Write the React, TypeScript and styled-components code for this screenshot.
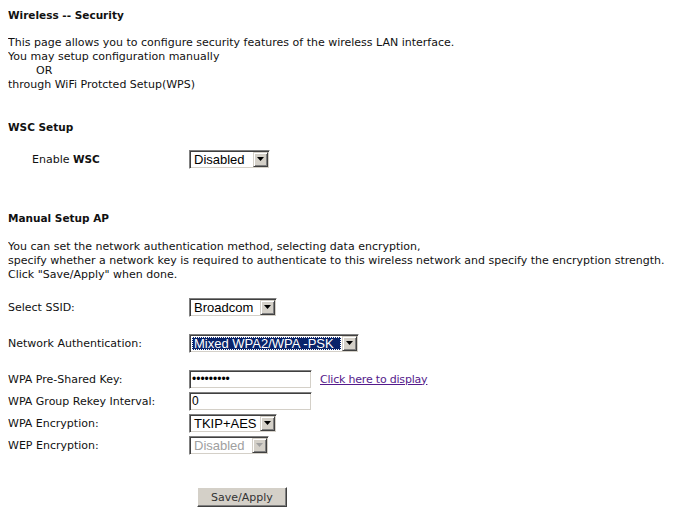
import React from "react";
import styled, { createGlobalStyle } from "styled-components";

const GlobalStyle = createGlobalStyle`
  body {
    margin: 8px;
    background: #ffffff;
    color: #000000;
    font-family: "DejaVu Sans", Verdana, sans-serif;
    font-size: 11px;
  }
`;

const Page = styled.div`
  display: flex;
  flex-direction: column;
  width: 676px;
`;

const Title = styled.div<{ top?: number }>`
  margin-top: ${(p) => p.top ?? 0}px;
  font-weight: bold;
  font-size: 10.5px;
  line-height: 14px;
  color: #111;
`;

const Text = styled.div<{ top?: number }>`
  margin-top: ${(p) => p.top ?? 0}px;
  line-height: 14px;
  color: #111;
  white-space: pre;
`;

const Row = styled.div<{ top?: number }>`
  display: flex;
  align-items: center;
  height: 20px;
  margin-top: ${(p) => p.top ?? 0}px;
`;

const Label = styled.div<{ indent?: number }>`
  width: ${(p) => 181 - (p.indent ?? 0)}px;
  padding-left: ${(p) => p.indent ?? 0}px;
  color: #111;
  b {
    font-weight: bold;
    font-size: 10.5px;
  }
`;

const SelectBox = styled.div<{ w: number }>`
  display: flex;
  align-items: stretch;
  box-sizing: border-box;
  width: ${(p) => p.w}px;
  height: 19px;
  border-top: 1px solid #808080;
  border-left: 1px solid #808080;
  border-bottom: 1px solid #ffffff;
  border-right: 1px solid #ffffff;
  box-shadow: inset 1px 1px 0 #404040, inset -1px -1px 0 #d4d0c8;
  background: #ffffff;
  padding: 1px;
`;

const SelectValue = styled.div<{ selected?: boolean; disabled?: boolean }>`
  flex: 1;
  display: flex;
  align-items: center;
  padding-left: 2px;
  margin: 1px;
  font-family: "Liberation Sans", Arial, sans-serif;
  font-size: 13px;
  background: ${(p) => (p.selected ? "#0a246a" : "transparent")};
  color: ${(p) => (p.selected ? "#ffffff" : p.disabled ? "#a0a0a0" : "#000000")};
  outline: ${(p) => (p.selected ? "1px dotted #ffffff" : "none")};
  outline-offset: -1px;
  white-space: nowrap;
  overflow: hidden;
`;

const ArrowButton = styled.div`
  width: 15px;
  box-sizing: border-box;
  display: flex;
  align-items: center;
  justify-content: center;
  background: #d4d0c8;
  border-top: 1px solid #d4d0c8;
  border-left: 1px solid #d4d0c8;
  border-bottom: 1px solid #404040;
  border-right: 1px solid #404040;
  box-shadow: inset 1px 1px 0 #ffffff, inset -1px -1px 0 #808080;
`;

const TextInput = styled.input`
  box-sizing: border-box;
  width: 123px;
  height: 19px;
  margin: 0;
  padding: 0 2px;
  border-top: 1px solid #808080;
  border-left: 1px solid #808080;
  border-bottom: 1px solid #ffffff;
  border-right: 1px solid #ffffff;
  box-shadow: inset 1px 1px 0 #404040, inset -1px -1px 0 #d4d0c8;
  font-family: "Liberation Sans", Arial, sans-serif;
  font-size: 12px;
  color: #000;
  background: #fff;
  outline: none;
`;

const DisplayLink = styled.a`
  margin-left: 8px;
  color: #551a8b;
  text-decoration: underline;
  font-family: "DejaVu Sans", Verdana, sans-serif;
  font-size: 11px;
  letter-spacing: -0.2px;
  cursor: pointer;
`;

const ButtonRow = styled.div`
  display: flex;
  margin-top: 32px;
  padding-left: 189px;
`;

const Button = styled.button`
  box-sizing: border-box;
  width: 90px;
  height: 20px;
  margin: 0;
  padding: 0;
  background: #d4d0c8;
  border-top: 1px solid #ffffff;
  border-left: 1px solid #ffffff;
  border-bottom: 1px solid #404040;
  border-right: 1px solid #404040;
  box-shadow: inset -1px -1px 0 #808080;
  font-family: "DejaVu Sans", Verdana, sans-serif;
  font-size: 11px;
  color: #333;
`;

const Arrow: React.FC<{ disabled?: boolean }> = ({ disabled }) => (
  <svg width="7" height="4" viewBox="0 0 7 4">
    <path d="M0 0h7L3.5 4z" fill={disabled ? "#a0a0a0" : "#000"} />
  </svg>
);

const Select: React.FC<{
  value: string;
  w: number;
  selected?: boolean;
  disabled?: boolean;
}> = ({ value, w, selected, disabled }) => (
  <SelectBox w={w}>
    <SelectValue selected={selected} disabled={disabled}>
      {value}
    </SelectValue>
    <ArrowButton>
      <Arrow disabled={disabled} />
    </ArrowButton>
  </SelectBox>
);

const App: React.FC = () => {
  return (
    <Page>
      <GlobalStyle />
      <Title>Wireless -- Security</Title>
      <Text top={14}>
        {"This page allows you to configure security features of the wireless LAN interface.\nYou may setup configuration manually\n        OR\nthrough WiFi Protcted Setup(WPS)"}
      </Text>

      <Title top={28}>WSC Setup</Title>
      <Row top={15}>
        <Label indent={24}>
          Enable <b>WSC</b>
        </Label>
        <Select value="Disabled" w={81} />
      </Row>

      <Title top={42}>Manual Setup AP</Title>
      <Text top={15}>
        {"You can set the network authentication method, selecting data encryption,\nspecify whether a network key is required to authenticate to this wireless network and specify the encryption strength.\nClick \"Save/Apply\" when done."}
      </Text>

      <Row top={15}>
        <Label>Select SSID:</Label>
        <Select value="Broadcom" w={88} />
      </Row>
      <Row top={16}>
        <Label>Network Authentication:</Label>
        <Select value="Mixed WPA2/WPA -PSK" w={170} selected />
      </Row>
      <Row top={16}>
        <Label>WPA Pre-Shared Key:</Label>
        <TextInput type="password" defaultValue="password1" />
        <DisplayLink>Click here to display</DisplayLink>
      </Row>
      <Row top={2}>
        <Label>WPA Group Rekey Interval:</Label>
        <TextInput type="text" defaultValue="0" />
      </Row>
      <Row top={2}>
        <Label>WPA Encryption:</Label>
        <Select value="TKIP+AES" w={88} />
      </Row>
      <Row top={2}>
        <Label>WEP Encryption:</Label>
        <Select value="Disabled" w={80} disabled />
      </Row>

      <ButtonRow>
        <Button>Save/Apply</Button>
      </ButtonRow>
    </Page>
  );
};

export default App;
